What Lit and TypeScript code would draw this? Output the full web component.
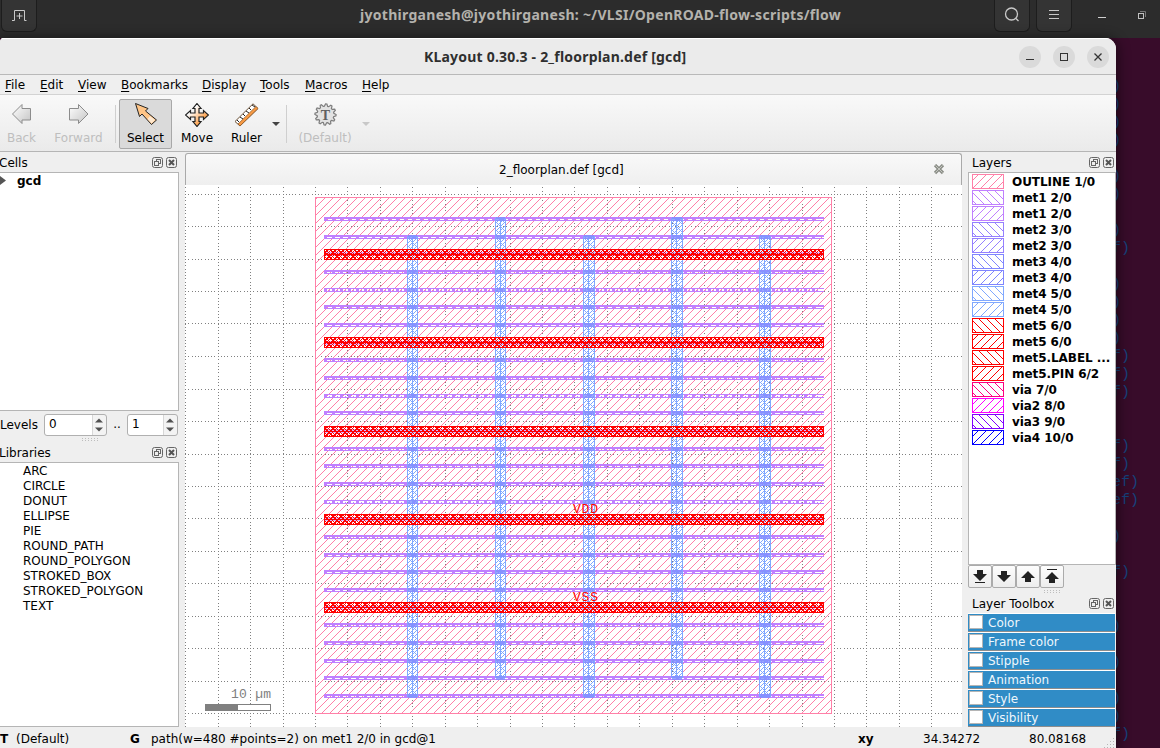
import { LitElement, html, svg, css } from "lit";
import { customElement } from "lit/decorators.js";

const R = Math.round;

const TERMINAL = [
  ")", ")", ")", ")", "", ")", ")", "", ")", "f)", "", ")", ")", ")", ")", "f)", "f)", "f)", "", "",
  "f)", "f)", "ef)", "ef)", "", ")", "", "f)", "", "", ")", "", ")", "", ")", ")", "f)",
];

@customElement("layout-view")
export class LayoutView extends LitElement {
  static styles = css`
    :host { display: block; background: #fff; overflow: hidden; }
    svg { display: block; }
    .lbl { font: 13px "Liberation Mono", monospace; fill: #f00; }
    .scale { font: 13px "Liberation Mono", monospace; fill: #808080; }
  `;

  private grid() {
    const s = 32.44;
    let d = "";
    for (let k = 0; k < 24; k++) {
      const x = R(185.2 + k * s);
      for (let j = 0; j < 170; j++) d += `M${x} ${R(184.2 + (j * s) / 10)}h1v1h-1z`;
    }
    for (let k = 0; k < 17; k++) {
      const y = k === 4 ? 323 : R(194 + k * s);
      for (let j = 0; j < 240; j++) d += `M${R(185.2 + (j * s) / 10)} ${y}h1v1h-1z`;
    }
    return d;
  }

  private hatch(x0: number, y0: number, x1: number, y1: number, period: number, phase: number, dir: number) {
    let d = "";
    for (let y = y0; y < y1; y++)
      for (let x = x0; x < x1; x++)
        if ((((x + dir * y - phase) % period) + period) % period === 0) d += `M${x} ${y}h1v1h-1z`;
    return d;
  }

  private frame(x: number, y: number, w: number, h: number) {
    return `M${x} ${y}h${w}v${h}h${-w}zM${x + 1} ${y + 1}v${h - 2}h${w - 2}v${-(h - 2)}z`;
  }

  render() {
    const rows = Array.from({ length: 28 }, (_, k) => R(217 + (k * 53) / 3));
    let met1 = "";
    rows.forEach((y, k) => {
      const alt = k % 6 === 4;
      met1 += `M324 ${y}h500v${alt ? 1 : 2}h-500zM324 ${y + 3}h500v1h-500zM324 ${y}h2v4h-2z`;
      for (let x = 324; x < 820; x += 8) met1 += alt ? `M${x} ${y + 1}h3v2h-3zM${x + 5} ${y + 2}h1v1h-1z` : `M${x} ${y + 2}h3v1h-3z`;
    });
    const cols = [407, 495, 583, 671, 759].map((x, i) => ({ x, w: i < 2 ? 11 : 12, t: i % 2 ? 218 : 236, b: i % 2 ? 678 : 697 }));
    let met4 = "";
    let vias = "";
    for (const c of cols) {
      const r = c.x + c.w - 1;
      met4 += this.frame(c.x, c.t, c.w, c.b - c.t) + `M${c.x + 5} ${c.t}h1v${c.b - c.t}h-1z`;
      met4 += this.hatch(c.x + 1, c.t, r, c.b, 8, 2, 1) + this.hatch(c.x + 1, c.t, r, c.b, 8, 6, 1);
      met4 += this.hatch(c.x + 1, c.t, r, c.b, 8, 2, -1);
      for (const y of rows) if (y >= c.t - 1 && y < c.b) vias += `M${c.x + 1} ${y}h${c.w - 2}v4h${2 - c.w}z`;
    }
    const reds = [249, 337, 426, 514, 602];
    let met5 = "";
    for (const y of reds) {
      met5 += this.frame(324, y, 500, 11) + `M324 ${y + 5}h500v1h-500z`;
      for (const p of [0, 4, 1]) {
        met5 += this.hatch(325, y + 1, 823, y + 10, 8, p, 1);
        met5 += this.hatch(325, y + 1, 823, y + 10, 8, p, -1);
      }
    }
    return html`<svg width="777" height="542" viewBox="185 185 777 542" shape-rendering="crispEdges">
      <path d=${this.grid()} fill="#808080"></path>
      <path d=${this.hatch(316, 198, 831, 713, 8, 2, 1)} fill="#ff80a8"></path>
      <rect x="315.5" y="197.5" width="516" height="516" fill="none" stroke="#ff80a8"></rect>
      <path d=${met1} fill="#c080ff"></path>
      <path d=${met4} fill="#80a8ff"></path>
      <path d=${vias} fill="#8090ff" opacity=".8"></path>
      ${reds.map((y) => svg`<rect x="325" y=${y + 1} width="498" height="9" fill="#fff" opacity=".4"></rect>`)}
      <path d=${met5} fill="#f00"></path>
      <text class="lbl" x="573" y="513" textLength="25">VDD</text>
      <text class="lbl" x="573" y="601" textLength="25">VSS</text>
      <text class="scale" x="231" y="698" textLength="40">10 µm</text>
      <rect x="205.5" y="704.5" width="65" height="6" fill="#fff" stroke="#808080"></rect>
      <rect x="205" y="704" width="33" height="7" fill="#808080"></rect>
    </svg>`;
  }
}

const LAYERS: [string, string][] = [
  ["OUTLINE 1/0", "#ff80a8"], ["met1 2/0", "#c080ff"], ["met1 2/0", "#c080ff"], ["met2 3/0", "#9580ff"],
  ["met2 3/0", "#9580ff"], ["met3 4/0", "#8086ff"], ["met3 4/0", "#8086ff"], ["met4 5/0", "#80a8ff"],
  ["met4 5/0", "#80a8ff"], ["met5 6/0", "#ff0000"], ["met5 6/0", "#ff0000"], ["met5.LABEL ...", "#ff0000"],
  ["met5.PIN 6/2", "#ff0000"], ["via 7/0", "#ff0080"], ["via2 8/0", "#ff00ff"], ["via3 9/0", "#8000ff"],
  ["via4 10/0", "#0000ff"],
];

const swatch = (color: string, i: number) => {
  let d = "";
  for (let y = 1; y < 14; y++)
    for (let x = 1; x < 31; x++) {
      const v = i % 2 ? x - y + 32 : x + y;
      if (v % 8 === 6) d += `M${x} ${y}h1v1h-1z`;
    }
  return html`<svg width="32" height="15" shape-rendering="crispEdges">
    <rect x=".5" y=".5" width="31" height="14" fill="#fff" stroke=${color}></rect><path d=${d} fill=${color}></path>
  </svg>`;
};

const dockButtons = html`<svg class="dock" width="26" height="12" fill="none" stroke="#666">
  <rect x=".5" y=".5" width="10" height="10" rx="2"></rect>
  <rect x="4.500" y="2.500" width="4" height="4"></rect><rect x="2.500" y="4.500" width="4" height="4" fill="#efefef"></rect>
  <rect x="14.500" y=".5" width="10" height="10" rx="2"></rect>
  <path d="M17 3l5 5M22 3l-5 5" stroke="#555" stroke-width="2"></path>
</svg>`;

const arrows = html`<svg class="arrows" width="14" height="20"><path d="M0 0V20" stroke="#bbb"></path>
  <path d="M3 7.500h8L7 3.500zM3 12.500h8l-4 4z" fill="#505050"></path></svg>`;

const gear = () => {
  let p = "";
  for (let i = 0; i < 48; i++) {
    const a = (i / 48) * Math.PI * 2;
    const r = i % 4 < 2 ? 10.6 : 8.4;
    p += `${i ? "L" : "M"}${(11.5 + r * Math.cos(a)).toFixed(1)} ${(11.5 + r * Math.sin(a)).toFixed(1)}`;
  }
  return p + "Z";
};

@customElement("app-root")
export class AppRoot extends LitElement {
  static styles = css`
    :host { display: block; position: relative; width: 1160px; height: 748px; overflow: hidden; background: #380c2a;
      font: 12px/15px "DejaVu Sans", sans-serif; color: #000; }
    * { box-sizing: border-box; }
    svg { display: block; flex: none; }
    .termbar { height: 38px; background: #2c2c2c; display: flex; align-items: flex-start; color: #b4b2ad; }
    .tbtn { height: 32px; width: 36px; border: 1px solid #1d1d1d; border-top: 0; border-radius: 0 0 6px 6px; background: #343434;
      display: flex; justify-content: center; padding-top: 6px; flex: none; }
    .new { margin-left: 1px; }
    .termtitle { width: 957px; padding: 4px 0 0 323px; font: bold 14px/22px "Noto Sans", sans-serif; white-space: nowrap; letter-spacing: .29px; flex: none; }
    .menu { margin-left: 6px; }
    .wmin { margin: 11px 0 0 26px; }
    .wmax { margin: 10px 0 0 29px; }
    .term { padding: 40px 0 0 1112px; font: 15px/18px "Liberation Mono", monospace; color: #16427c; }
    .term div { height: 18px; }
    .win { position: absolute; left: 0; top: 38px; width: 1116px; height: 710px; background: #efefef; border-radius: 4px 11px 0 0;
      box-shadow: 0 2px 12px 3px rgba(0,0,0,.42); display: flex; flex-direction: column; overflow: hidden; }
    .title { height: 37px; background: #ebebeb; border-top: 1px solid #fff; border-bottom: 1px solid #b9b9b9; display: flex;
      justify-content: flex-end; align-items: center; gap: 12px; padding-right: 7px; flex: none; }
    .name { width: 583px; font: bold 14px/20px "Noto Sans", sans-serif; color: #2f2f2f; white-space: nowrap; letter-spacing: .2px; }
    .circ { width: 22px; height: 22px; border-radius: 50%; background: #dadada; }
    .menubar { height: 20px; display: flex; padding-left: 5px; border-bottom: 1px solid #d3d3d3; line-height: 20px; flex: none; }
    .menubar span { flex: none; }
    u { text-underline-offset: 2px; text-decoration-thickness: 1px; }
    .toolbar { height: 57px; background: linear-gradient(#f9f9f9, #eaeaea); border-bottom: 1px solid #b5b5b5; display: flex;
      padding-top: 4px; flex: none; }
    .tool { height: 50px; display: flex; flex-direction: column; align-items: center; justify-content: space-between; padding: 3px 0 2px; flex: none; border: 1px solid transparent; }
    .off { color: #bebebe; }
    .sel { background: #dadada; border-color: #a8a8a8; border-radius: 2px; }
    .sep { width: 1px; height: 38px; background: #cfcfcf; margin-top: 6px; flex: none; }
    .drop { margin-top: 22px; }
    .body { display: flex; flex: 1; min-height: 0; }
    .left { width: 179px; display: flex; flex-direction: column; margin-right: 6px; }
    .head { display: flex; justify-content: space-between; height: 20px; align-items: center; flex: none; padding: 2px 1px 0 0; }
    .left .head { text-indent: -1px; }
    .list { background: #fff; border: 1px solid #b5b5b5; border-left: 0; flex: none; }
    .cells { height: 239px; display: flex; gap: 11px; font-weight: bold; padding-top: 1px; }
    .levels { height: 26px; display: flex; align-items: center; flex: none; padding-top: 1px; }
    .lv { width: 44px; padding-top: 1px; }
    .dots { width: 20px; text-align: center; }
    .spin { height: 22px; border: 1px solid #b0b0b0; border-radius: 3px; background: linear-gradient(90deg, #fff calc(100% - 14px), #f3f3f3 0); 
      display: flex; justify-content: space-between; align-items: center; padding-left: 4px; }
    .s1 { width: 63px; } .s2 { width: 51px; }
    .handle { height: 5px; display: flex; justify-content: center; flex: none; }
    .right .handle { height: 4px; padding-left: 20px; }
    .libs { height: 265px; padding: 1px 0 0 23px; }
    .center { width: 777px; display: flex; flex-direction: column; }
    .tab { height: 32px; margin-top: 1px; border: 1px solid #a9a9a9; border-bottom: 0; border-radius: 3px 3px 0 0; flex: none;
      background: linear-gradient(#f9f9f9, #efefef); display: flex; align-items: center; justify-content: flex-end; padding-right: 16px; }
    .tabname { width: 434px; padding-top: 2px; }
    .right { width: 148px; margin-left: 6px; display: flex; flex-direction: column; }
    .right .head { padding-left: 4px; }
    .layers { height: 393px; padding: 1px 0 0 3px; border-left: 1px solid #b5b5b5; font-weight: bold; }
    .layer { height: 16px; display: flex; gap: 8px; line-height: 17px; white-space: nowrap; letter-spacing: -.06px; }
    .btns { display: flex; height: 24px; flex: none; }
    .btn { width: 24px; height: 23px; border: 1px solid #ababab; border-radius: 2px; background: linear-gradient(#fdfdfd, #ededed);
      display: flex; align-items: center; justify-content: center; }
    .trow { height: 19px; border-top: 1px solid #fff; border-bottom: 1px solid #8d8d8d; background: #308cc6; display: flex; gap: 5px;
      color: #eff7fc; line-height: 18px; padding-left: 1px; flex: none; margin-right: 1px; }
    .check { width: 14px; height: 14px; border: 1px solid #b5b5b5; background: #fff; margin-top: 1px; }
    .status { height: 20px; display: flex; line-height: 22px; white-space: nowrap; flex: none; padding-left: 0; }
    .status b, .status span { flex: none; }
  `;

  render() {
    const menu: [string, number][] = [["File", 35], ["Edit", 38], ["View", 43], ["Bookmarks", 81], ["Display", 58], ["Tools", 45], ["Macros", 57], ["Help", 40]];
    const up = "M0 7h4v4h6V7h4L7 0z";
    const down = "M0 4h4V0h6v4h4l-7 7z";
    const grip = html`<svg width="18" height="4" shape-rendering="crispEdges"><path d="M1 1.500H18M1 3.500H18" stroke="#bdbdbd" stroke-dasharray="1 2"></path></svg>`;
    return html`
      <div class="termbar">
        <div class="tbtn new"><svg width="16" height="16" fill="none" stroke="#c9c9c9"><path d="M1 14.500H3.500V4.500H13.500V14.500H15.500M8.500 7v6M5.500 10h6"></path></svg></div>
        <div class="termtitle">jyothirganesh@jyothirganesh: ~/VLSI/OpenROAD-flow-scripts/flow</div>
        <div class="tbtn"><svg width="16" height="18" fill="none" stroke="#c9c9c9" stroke-width="1.300"><circle cx="7.500" cy="8" r="6"></circle><path d="M12 12.500l2.500 2.500"></path></svg></div>
        <div class="tbtn menu"><svg width="12" height="18" stroke="#c9c9c9"><path d="M1 4.500H11M1 8.500H11M1 12.500H11"></path></svg></div>
        <svg class="wmin" width="9" height="8"><path d="M0 6.500H8" stroke="#d0d0d0"></path></svg>
        <svg class="wmax" width="12" height="12" fill="none" stroke="#c0c0c0"><rect x="2.500" y="3.500" width="5" height="5"></rect><path d="M4 1.500H9.500V7" stroke="#777"></path></svg>
      </div>
      <div class="term">${TERMINAL.map((t) => html`<div>${t}</div>`)}</div>
      <div class="win">
        <div class="title">
          <div class="name">KLayout 0.30.3 - 2_floorplan.def [gcd]</div>
          <svg class="circ" viewBox="0 0 22 22"><path d="M7 13.500H15" stroke="#333"></path></svg>
          <svg class="circ" viewBox="0 0 22 22"><rect x="7.500" y="7.500" width="7" height="7" fill="none" stroke="#333"></rect></svg>
          <svg class="circ" viewBox="0 0 22 22"><path d="M7.500 7.500l7 7M14.500 7.500l-7 7" stroke="#333" stroke-width="1.300"></path></svg>
        </div>
        <div class="menubar">${menu.map(([m, w]) => html`<span style="width:${w}px"><u>${m[0]}</u>${m.slice(1)}</span>`)}</div>
        <div class="toolbar">
          <div class="tool off" style="width:43px"><svg width="22" height="22"><defs><linearGradient id="g" x2="1" y2="1"><stop offset="0" stop-color="#fff"></stop><stop offset="1" stop-color="#c4c4c4"></stop></linearGradient></defs><path d="M1.500 11L11 1.500V5.500H19.500V17H11V20.500z" fill="url(#g)" stroke="#8c8c8c"></path></svg>Back</div>
          <div class="tool off" style="width:71px"><svg width="22" height="22"><path d="M20 11L10.500 1.500V5.500H1.500V17H10.500V20.500z" fill="url(#g)" stroke="#8c8c8c"></path></svg>Forward</div>
          <div class="sep" style="margin:6px 3px 0 1px"></div>
          <div class="tool sel" style="width:53px"><svg width="24" height="22"><path d="M1.500.5L14 5.500L11.500 8L22.500 17L17.500 21.500L8 11L5.500 13.500z" fill="#ffc587" stroke="#222"></path><path d="M16 13l5 4-3.500 3.500-4-4.500z" fill="#ffe9d0"></path></svg>Select</div>
          <div class="tool" style="width:50px"><svg width="24" height="24"><defs><linearGradient id="o" x2="1" y2="1"><stop offset=".3" stop-color="#fff"></stop><stop offset=".8" stop-color="#ff9430"></stop></linearGradient></defs><path d="M12 .5L16 5.500H14V10H18.500V7.500L23.500 12L18.500 16.500V14H14V18.500H16L12 23.500L8 18.500H10V14H5.500V16.500L.5 12L5.500 7.500V10H10V5.500H8z" fill="url(#o)" stroke="#222" stroke-width="1.200"></path></svg>Move</div>
          <div class="tool" style="width:49px"><svg width="25" height="24"><path d="M1 18.500L19 .8L24 5.500L6 23z" fill="#fff" stroke="#6b5137"></path><path d="M4 21L22 3.500L24 5.500L6 23z" fill="#f79a45" stroke="#8a5728" stroke-width=".7"></path><path d="M3 17l2 2M6 14l3 2M9 11l2 2M12 8l3 2M15 5l2 2M18 2l3 2" stroke="#222"></path></svg>Ruler</div>
          <svg class="drop" width="10" height="6"><path d="M1 1H9L5 5z" fill="#444"></path></svg>
          <div class="sep" style="margin-left:5px"></div>
          <div class="tool off" style="width:72px;margin-left:2px"><svg width="23" height="23"><path d=${gear()} fill="#e2e2e2" stroke="#7d7d7d" stroke-width="1.200"></path><text x="11.500" y="16.500" text-anchor="middle" font-family="Liberation Serif" font-size="14" font-weight="bold" fill="#606060">T</text></svg>(Default)</div>
          <svg class="drop" width="10" height="6"><path d="M1 1H9L5 5z" fill="#c8c8c8"></path></svg>
        </div>
        <div class="body">
          <div class="left">
            <div class="head">Cells${dockButtons}</div>
            <div class="list cells"><svg width="6" height="14"><path d="M0 2L6 6.500L0 11z" fill="#555"></path></svg>gcd</div>
            <div class="levels"><span class="lv">Levels</span><span class="spin s1">0${arrows}</span><span class="dots">..</span><span class="spin s2">1${arrows}</span></div>
            <div class="handle">${grip}</div>
            <div class="head">Libraries${dockButtons}</div>
            <div class="list libs">${["ARC", "CIRCLE", "DONUT", "ELLIPSE", "PIE", "ROUND_PATH", "ROUND_POLYGON", "STROKED_BOX", "STROKED_POLYGON", "TEXT"].map((t) => html`<div>${t}</div>`)}</div>
          </div>
          <div class="center">
            <div class="tab"><span class="tabname">2_floorplan.def [gcd]</span><svg width="12" height="12"><path d="M2 1l8 8M10 1l-8 8" stroke="#8c8f88" stroke-width="3.200"></path><path d="M2.500 1.500l7 7M9.500 1.500l-7 7" stroke="#c4c6c0"></path></svg></div>
            <layout-view></layout-view>
          </div>
          <div class="right">
            <div class="head">Layers${dockButtons}</div>
            <div class="list layers">${LAYERS.map(([n, c], i) => html`<div class="layer">${swatch(c, i)}${n}</div>`)}</div>
            <div class="btns">
              ${[[down, 1], [down, 0], [up, 0], [up, 2]].map(([p, k]) => html`<div class="btn"><svg width="14" height="15" fill="#222"><path transform="translate(0 ${k === 1 ? 1 : k === 2 ? 3 : 2})" d=${p}></path>${k ? svg`<rect x="2" y=${k === 1 ? 13 : 0} width="10" height="1"></rect>` : ""}</svg></div>`)}
            </div>
            <div class="handle">${grip}</div>
            <div class="head">Layer Toolbox${dockButtons}</div>
            ${["Color", "Frame color", "Stipple", "Animation", "Style", "Visibility"].map((t) => html`<div class="trow"><span class="check"></span>${t}</div>`)}
          </div>
        </div>
        <div class="status"><b style="width:16px">T</b><span style="width:114px">(Default)</span><b style="width:21px">G</b><span style="width:707px">path(w=480 #points=2) on met1 2/0 in gcd@1</span><b style="width:65px">xy</b><span style="width:106px">34.34272</span><span style="width:75px">80.08168</span>
          <svg width="12" height="20" shape-rendering="crispEdges"><path d="M9 10.500h2M6 13.500h5M3 16.500h8M0 19.500h11" stroke="#b5b5b5" stroke-dasharray="1 2"></path></svg></div>
      </div>`;
  }
}
